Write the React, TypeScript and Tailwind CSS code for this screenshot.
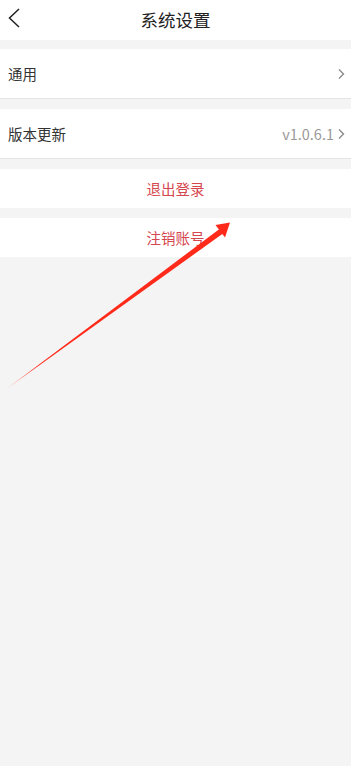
const FONT = { fontFamily: '"Noto Sans CJK SC", "Noto Sans", sans-serif' }

function Chevron() {
  return (
    <svg width="8" height="12" viewBox="0 0 8 12" className="shrink-0">
      <polyline points="2,1.5 6.5,6 2,10.5" fill="none" stroke="#8c8c8c" strokeWidth="1.4" />
    </svg>
  )
}

function Row({ label, value }: { label: string; value?: string }) {
  return (
    <div className="flex h-[50px] items-center justify-between border-b border-[#e4e4e4] bg-white pl-[8px] pr-[6px]">
      <span className="text-[14.5px] text-[#333]">{label}</span>
      <div className="flex items-center gap-[3px]">
        {value && <span className="text-[14.5px] text-[#999]">{value}</span>}
        <Chevron />
      </div>
    </div>
  )
}

function Arrow() {
  // 标注箭头:从左下方细尾延伸到右上角的箭头
  return (
    <svg className="pointer-events-none absolute left-0 top-0" width="351" height="766" viewBox="0 0 351 766">
      <defs>
        <linearGradient id="tail" x1="5" y1="390" x2="230" y2="223" gradientUnits="userSpaceOnUse">
          <stop offset="0" stopColor="#ff2a1a" stopOpacity="0.35" />
          <stop offset="0.15" stopColor="#ff2a1a" />
          <stop offset="1" stopColor="#ff2a1a" />
        </linearGradient>
      </defs>
      <polygon points="5,390 219.5,229 223,233.5" fill="url(#tail)" />
      <polygon points="230,222.5 215.5,225 225,237.5" fill="#ff2a1a" />
    </svg>
  )
}

export default function App() {
  return (
    <div className="relative flex min-h-[766px] w-[351px] flex-col bg-[#f4f4f4]" style={FONT}>
      <header className="relative flex h-[40px] items-center justify-center bg-white">
        <svg width="14" height="22" viewBox="0 0 14 22" className="absolute left-[7px] top-[7px]">
          <polyline points="12,2 2.5,11 12,20" fill="none" stroke="#222" strokeWidth="1.5" />
        </svg>
        <h1 className="text-[17.5px] text-[#222]">系统设置</h1>
      </header>

      <div className="mt-[9px] flex flex-col gap-[10px]">
        <Row label="通用" />
        <Row label="版本更新" value="v1.0.6.1" />
        <button className="flex h-[39px] items-center justify-center bg-white text-[14.5px] text-[#d5474f]">退出登录</button>
        <button className="flex h-[39px] items-center justify-center bg-white text-[14.5px] text-[#d5474f]">注销账号</button>
      </div>

      <Arrow />
    </div>
  )
}
